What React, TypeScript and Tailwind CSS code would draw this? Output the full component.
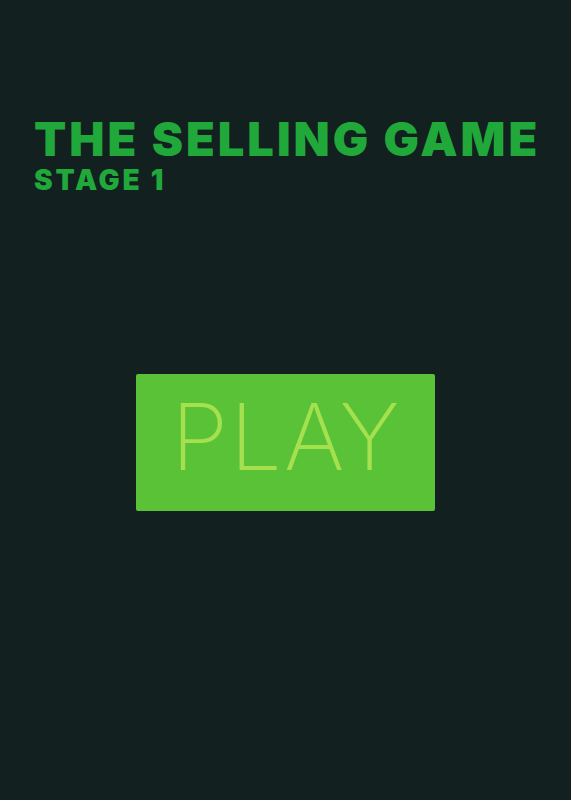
export default function App() {
  return (
    <div className="min-h-[800px] w-full bg-[#132020] flex flex-col">
      {/* heading */}
      <header className="pt-[113px] pl-[34px] flex flex-col">
        <h1
          className="text-[47px] leading-[52px] font-black text-[#21a83a] tracking-[3px]"
          style={{ fontFamily: 'Inter, "Liberation Sans", sans-serif' }}
        >
          THE SELLING GAME
        </h1>
        <h2
          className="text-[28px] leading-[30px] font-black text-[#21a83a] tracking-[2.8px]"
          style={{ fontFamily: 'Inter, "Liberation Sans", sans-serif' }}
        >
          STAGE 1
        </h2>
      </header>

      <div className="flex justify-center pt-[179px]">
        <button className="w-[299px] h-[137px] rounded-[2px] bg-[#5ac236] flex items-center justify-center pb-[12px]">
          <span
            className="text-[92px] leading-none font-extralight text-[#a5e04f] tracking-[2px] pl-[2px]"
            style={{ fontFamily: 'Inter, "Liberation Sans", sans-serif' }}
          >
            PLAY
          </span>
        </button>
      </div>
    </div>
  );
}
